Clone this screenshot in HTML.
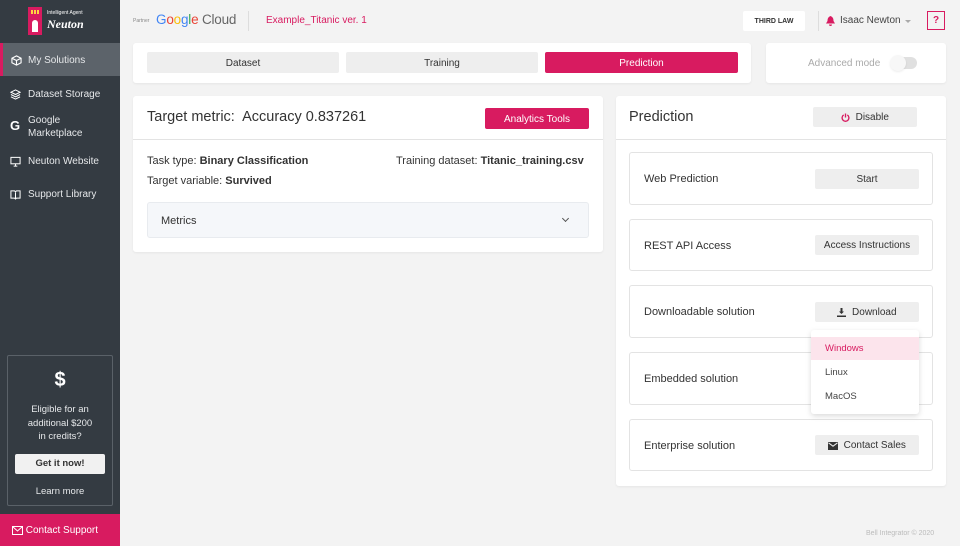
<!DOCTYPE html>
<html><head><meta charset="utf-8"><style>
*{box-sizing:border-box;margin:0;padding:0}
body{width:960px;height:546px;overflow:hidden;background:#f3f3f3;font-family:"Liberation Sans",sans-serif;color:#333;position:relative;font-size:11px}
.a{position:absolute}
.sb{left:0;top:0;width:120px;height:546px;background:#343b42}
.nav{left:0;width:120px;color:#e6e8ea;font-size:10px;padding-left:28px;display:flex;align-items:center}
.nav svg{position:absolute;left:10px}
.card{background:#fff;border-radius:3px;box-shadow:0 1px 2px rgba(0,0,0,.06)}
.btn{background:#eee;border-radius:2px;display:flex;align-items:center;justify-content:center;font-size:10px;color:#333}
.pk{color:#d81b60}
.item{left:629px;width:304px;border:1px solid #e3e3e3;border-radius:3px;background:#fff;font-size:11px;display:flex;align-items:center;padding-left:14px}
</style></head><body>
<div class="a sb"></div>
<div class="a" style="left:28px;top:7px;width:14px;height:28px;background:#d81b60"></div>
<div class="a" style="left:31px;top:10px;width:8px;height:4px;background:repeating-linear-gradient(90deg,#ffd740 0 2px,transparent 2px 3px)"></div>
<div class="a" style="left:32px;top:20px;width:6px;height:12px;background:#fff;border-radius:3px 3px 0 0"></div>
<div class="a" style="left:47px;top:10px;color:#fff;font-size:5px">Intelligent Agent</div>
<div class="a" style="left:47px;top:17px;color:#fff;font-size:12px;font-style:italic;font-weight:bold;font-family:'Liberation Serif',serif">Neuton</div>
<div class="a nav" style="top:43px;height:33px;background:#5c636a;border-left:3px solid #d81b60;padding-left:25px;padding-top:2px"><svg width="11" height="11" viewBox="0 0 12 12" style="left:8px" fill="none" stroke="#fff" stroke-width="1.2"><path d="M6 1L11 3.5V8.5L6 11L1 8.5V3.5ZM1 3.5L6 6L11 3.5M6 6V11"/></svg>My Solutions</div>
<div class="a nav" style="top:86px;height:16px"><svg width="11" height="11" viewBox="0 0 12 12" fill="none" stroke="#fff" stroke-width="1.1"><path d="M6 1L11 3.5L6 6L1 3.5ZM1 6L6 8.5L11 6M1 8.5L6 11L11 8.5"/></svg>Dataset Storage</div>
<div class="a nav" style="top:113px;height:28px;line-height:13px"><span class="a" style="left:10px;top:6px;font-weight:bold;font-size:13px;color:#fff">G</span>Google<br>Marketplace</div>
<div class="a nav" style="top:153px;height:16px"><svg width="11" height="11" viewBox="0 0 12 12" fill="none" stroke="#fff" stroke-width="1.1"><rect x="1" y="1.5" width="10" height="7"/><path d="M4 11h4M6 8.5V11"/></svg>Neuton Website</div>
<div class="a nav" style="top:186px;height:16px"><svg width="11" height="11" viewBox="0 0 12 12" fill="none" stroke="#fff" stroke-width="1.1"><path d="M1 2h4l1 1 1-1h4v8H7l-1 1-1-1H1ZM6 3v8"/></svg>Support Library</div>
<div class="a" style="left:7px;top:355px;width:106px;height:151px;border:1px solid #5a6168;border-radius:2px;text-align:center;color:#e6e8ea;font-size:9.5px">
<div style="font-size:20px;font-weight:bold;color:#fff;margin-top:13px">$</div>
<div style="line-height:13.5px;margin-top:11px">Eligible for an<br>additional $200<br>in credits?</div>
<div style="margin:10px 7px 0;height:20px;background:#f1f1f1;color:#333;font-weight:bold;line-height:20px;border-radius:2px">Get it now!</div>
<div style="margin-top:12px">Learn more</div></div>
<div class="a" style="left:0;top:514px;width:120px;height:32px;background:#d81b60;color:#fff;font-size:10px;display:flex;align-items:center;padding-left:12px;padding-top:1px"><svg width="11" height="9" viewBox="0 0 11 9" fill="none" stroke="#fff" stroke-width="1"><rect x=".5" y=".5" width="10" height="8"/><path d="M.5 .5L5.5 5 10.5 .5"/></svg>&nbsp;Contact Support</div>

<div class="a" style="left:133px;top:18px;font-size:5px;color:#888">Partner</div>
<div class="a" style="left:156px;top:12px;font-size:13.5px;letter-spacing:-.2px"><span style="color:#4285f4">G</span><span style="color:#ea4335">o</span><span style="color:#fbbc05">o</span><span style="color:#4285f4">g</span><span style="color:#34a853">l</span><span style="color:#ea4335">e</span> <span style="color:#666">Cloud</span></div>
<div class="a" style="left:248px;top:11px;width:1px;height:20px;background:#ddd"></div>
<div class="a pk" style="left:266px;top:15px;font-size:10px">Example_Titanic ver. 1</div>
<div class="a" style="left:743px;top:11px;width:62px;height:20px;background:#fff;border-radius:2px;font-size:7px;font-weight:bold;display:flex;align-items:center;justify-content:center">THIRD LAW</div>
<div class="a" style="left:818px;top:11px;width:1px;height:20px;background:#ddd"></div>
<svg class="a" style="left:826px;top:16px" width="9" height="10" viewBox="0 0 9 10"><path d="M4.5 0C2.5 1 1.5 2 1.5 5L0 7.5H9L7.5 5C7.5 2 6.5 1 4.5 0ZM3 8.5h3A1.5 1.5 0 0 1 3 8.5Z" fill="#d81b60"/></svg>
<div class="a" style="left:840px;top:15px;font-size:10px;color:#444">Isaac Newton</div>
<div class="a" style="left:905px;top:20px;border:3px solid transparent;border-top:3px solid #aaa"></div>
<div class="a pk" style="left:927px;top:11px;width:18px;height:19px;border:1px solid #d81b60;font-weight:bold;font-size:10px;text-align:center;line-height:17px">?</div>

<div class="a card" style="left:133px;top:43px;width:618px;height:40px"></div>
<div class="a btn" style="left:147px;top:52px;width:192px;height:21px;padding-top:1px">Dataset</div>
<div class="a btn" style="left:346px;top:52px;width:192px;height:21px;padding-top:1px">Training</div>
<div class="a btn" style="left:545px;top:52px;width:193px;height:21px;padding-top:1px;background:#d81b60;color:#fff">Prediction</div>
<div class="a card" style="left:766px;top:43px;width:180px;height:40px"></div>
<div class="a" style="left:808px;top:58px;font-size:10px;color:#aaa">Advanced mode</div>
<div class="a" style="left:892px;top:57px;width:25px;height:12px;border-radius:6px;background:#e0e0e0"></div>
<div class="a" style="left:890px;top:55px;width:16px;height:16px;border-radius:8px;background:#f7f7f7;box-shadow:0 1px 2px rgba(0,0,0,.08)"></div>

<div class="a card" style="left:133px;top:96px;width:470px;height:156px"></div>
<div class="a" style="left:147px;top:109px;font-size:14.5px;color:#333">Target metric:&nbsp; Accuracy 0.837261</div>
<div class="a btn" style="left:485px;top:108px;width:104px;height:21px;padding-top:1px;background:#d81b60;color:#fff">Analytics Tools</div>
<div class="a" style="left:133px;top:139px;width:470px;height:1px;background:#e3e3e3"></div>
<div class="a" style="left:147px;top:155px;font-size:11px">Task type: <b>Binary Classification</b></div>
<div class="a" style="left:147px;top:175px;font-size:11px">Target variable: <b>Survived</b></div>
<div class="a" style="left:396px;top:155px;font-size:11px">Training dataset: <b>Titanic_training.csv</b></div>
<div class="a" style="left:147px;top:202px;width:442px;height:36px;background:#f5f7fa;border:1px solid #e8ebef;border-radius:3px;padding-left:13px;line-height:36px;font-size:11px">Metrics</div>
<div class="a" style="left:563px;top:216px;width:5px;height:5px;border-right:1px solid #555;border-bottom:1px solid #555;transform:rotate(45deg)"></div>

<div class="a card" style="left:616px;top:96px;width:330px;height:390px"></div>
<div class="a" style="left:629px;top:109px;font-size:14.5px">Prediction</div>
<div class="a btn" style="left:813px;top:107px;width:104px;height:20px;padding-top:1px"><svg width="9" height="9" viewBox="0 0 10 10" fill="none" stroke="#d81b60" stroke-width="1.5"><path d="M3 2.2A3.8 3.8 0 1 0 7 2.2M5 .5V5"/></svg>&nbsp;&nbsp;Disable</div>
<div class="a" style="left:616px;top:139px;width:330px;height:1px;background:#e3e3e3"></div>
<div class="a item" style="top:152px;height:53px;padding-top:1px">Web Prediction</div>
<div class="a btn" style="left:815px;top:169px;width:104px;height:20px;padding-top:1px">Start</div>
<div class="a item" style="top:219px;height:52px;padding-top:2px">REST API Access</div>
<div class="a btn" style="left:815px;top:235px;width:104px;height:20px;padding-top:1px">Access Instructions</div>
<div class="a item" style="top:285px;height:53px;padding-top:1px">Downloadable solution</div>
<div class="a btn" style="left:815px;top:302px;width:104px;height:20px;padding-top:1px"><svg width="9" height="9" viewBox="0 0 9 9"><path d="M3.5 0h2v3.5H7L4.5 6 2 3.5h1.5ZM0 7.5h9V9H0Z" fill="#333"/></svg>&nbsp;&nbsp;Download</div>
<div class="a item" style="top:352px;height:53px;padding-top:1px">Embedded solution</div>
<div class="a item" style="top:419px;height:52px;padding-top:2px">Enterprise solution</div>
<div class="a btn" style="left:815px;top:435px;width:104px;height:20px;padding-top:1px"><svg width="10" height="8" viewBox="0 0 10 8"><path d="M0 0h10v8H0Z" fill="#333"/><path d="M.5 .8L5 4.2 9.5 .8" stroke="#eee" fill="none"/></svg>&nbsp;&nbsp;Contact Sales</div>
<div class="a" style="left:811px;top:330px;width:108px;height:84px;background:#fff;border-radius:3px;box-shadow:0 2px 6px rgba(0,0,0,.15);font-size:9.5px;color:#444">
<div style="margin-top:7px;height:23px;background:#fce4ec;color:#d81b60;padding-left:14px;line-height:24px">Windows</div>
<div style="padding-left:14px;line-height:25px">Linux</div>
<div style="padding-left:14px;line-height:23px">MacOS</div></div>
<div class="a" style="left:866px;top:530px;font-size:7px;color:#bbb">Bell Integrator © 2020</div>
</body></html>
